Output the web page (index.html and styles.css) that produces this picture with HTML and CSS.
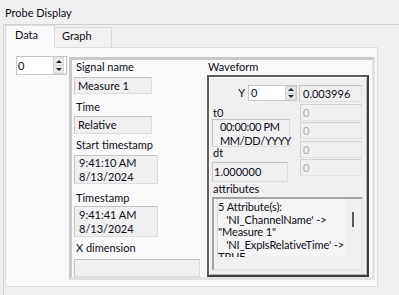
FILE: index.html
```html
<!DOCTYPE html>
<html>
<head>
<meta charset="utf-8">
<link rel="stylesheet" href="styles.css">
</head>
<body>
<div class="title">Probe Display</div>
<div class="frame">
  <div class="tabs">
    <div class="tab active">Data</div>
    <div class="tab graph">Graph</div>
  </div>
  <div class="page">
    <div class="spin idx">
      <span class="val">0</span>
      <span class="btns"><span class="b"><i class="up"></i></span><span class="b"><i class="dn"></i></span></span>
    </div>
    <div class="cluster">
      <div class="col-left">
        <div class="lbl">Signal name</div>
        <div class="fld f-name">Measure 1</div>
        <div class="lbl l-time">Time</div>
        <div class="fld f-time">Relative</div>
        <div class="lbl l-start">Start timestamp</div>
        <div class="fld ts f-start">9:41:10 AM<br>8/13/2024</div>
        <div class="lbl l-ts">Timestamp</div>
        <div class="fld ts f-ts">9:41:41 AM<br>8/13/2024</div>
        <div class="lbl l-x">X dimension</div>
        <div class="fld f-x"></div>
      </div>
      <div class="col-right">
        <div class="lbl l-wf">Waveform</div>
        <div class="wf">
          <div class="wf-top">
            <div class="wf-left">
              <div class="yrow">
                <span class="ylbl">Y</span>
                <div class="spin yspin">
                  <span class="val">0</span>
                  <span class="btns"><span class="b"><i class="up"></i></span><span class="b"><i class="dn"></i></span></span>
                </div>
              </div>
              <div class="slbl l-t0">t0</div>
              <div class="fld t0">00:00:00 PM<br>MM/DD/YYYY</div>
              <div class="slbl l-dt">dt</div>
              <div class="fld dt">1.000000</div>
            </div>
            <div class="wf-right">
              <div class="fld yval">0.003996</div>
              <div class="fld zero z1">0</div>
              <div class="fld zero z2">0</div>
              <div class="fld zero z3">0</div>
              <div class="fld zero z4">0</div>
            </div>
          </div>
          <div class="slbl l-attr">attributes</div>
          <div class="attr">
            <div class="attr-text"><div>5 Attribute(s):</div><div>   'NI_ChannelName' -&gt;</div><div>"Measure 1"</div><div>   'NI_ExpIsRelativeTime' -&gt;</div><div class="cut">TRUE</div></div>
            <div class="attr-sb"><span class="thumb"></span></div>
          </div>
        </div>
      </div>
    </div>
  </div>
</div>
</body>
</html>
```

FILE: styles.css
```css
* { box-sizing: border-box; }
html, body { margin: 0; padding: 0; }
body {
  width: 399px;
  height: 295px;
  overflow: hidden;
  background: #f0f0f0;
  font-family: Lato, "Noto Sans", sans-serif;
  font-size: 11px;
  line-height: 16px;
  color: #0c0c16;
}
.title { height: 24px; padding: 5px 0 0 5px; }
.frame {
  margin-left: 3px;
  border-left: 1px solid #d2d2d2;
  border-top: 1px solid #d2d2d2;
  padding-left: 1px;
  height: 271px;
}
.tabs { display: flex; align-items: flex-end; height: 22px; }
.tab { border: 1px solid #dadada; border-bottom: none; }
.tab.active {
  width: 50px; height: 23px; margin-bottom: -1px;
  padding: 1px 0 0 9px;
  background: #f9f9f9;
  position: relative; z-index: 1;
}
.tab.graph {
  width: 57px; height: 20px;
  padding: 0 0 0 7px;
  background: #f2f2f2;
  border-left: none;
}
.page {
  width: 373px; height: 240px;
  background: #f9f9f9;
  border: 1px solid #dedede;
  display: flex; align-items: flex-start; gap: 2px;
  padding: 8px 0 0 10px;
}
/* spinner */
.spin { display: flex; background: #fff; border: 1px solid #c6c6c6; }
.spin .val { flex: 1; }
.btns { display: flex; flex-direction: column; border: 1px solid #d6d6d6; background: #e9e9e9; }
.btns .b { flex: 1; display: flex; align-items: center; justify-content: center; }
.btns .b + .b { border-top: 1px solid #cfcfcf; }
.up { width: 0; height: 0; border-left: 3px solid transparent; border-right: 3px solid transparent; border-bottom: 3px solid #222; }
.dn { width: 0; height: 0; border-left: 3px solid transparent; border-right: 3px solid transparent; border-top: 3px solid #222; }
.idx { width: 51px; height: 19px; line-height: 17px; }
.idx .val { padding-left: 1px; }
.idx .btns { width: 11px; margin: 0 2px 0 0; }

/* cluster */
.cluster {
  width: 306px; height: 223px; margin-top: 1px;
  border: 3px solid;
  border-color: #c9c9c9 #e2e2e2 #e2e2e2 #c9c9c9;
  display: flex;
  padding: 0 3px 0 2px;
}
.col-left { width: 133px; display: flex; flex-direction: column; align-items: flex-start; }
.col-right { width: 162px; }
.lbl { line-height: 14px; padding-left: 2px; }
.fld {
  background: #f0f0f0;
  border: 1px solid;
  border-color: #c3c3c3 #dcdcdc #dcdcdc #c3c3c3;
  line-height: 15px;
  white-space: nowrap;
}
.f-name { width: 78px; height: 17px; margin-top: 3px; padding-left: 3px; }
.l-time { margin-top: 6px; }
.f-time { width: 78px; height: 18px; margin-top: 2px; padding-left: 3px; }
.l-start { margin-top: 4px; }
.ts { width: 84px; height: 29px; line-height: 14px; padding-left: 4px; }
.f-start { margin-top: 3px; }
.l-ts { margin-top: 7px; }
.f-ts { margin-top: 1px; height: 31px; padding-top: 1px; }
.l-x { margin-top: 4px; }
.f-x { width: 126px; height: 18px; margin-top: 4px; }

/* waveform */
.l-wf { padding-left: 1px; }
.wf {
  margin-top: 1px;
  width: 162px; height: 202px;
  border: 2px solid;
  border-color: #5e5e5e #3c3c3c #3c3c3c #5e5e5e;
  box-shadow: inset 1px 1px 0 #fdfdfd, inset -1px -1px 0 #b4b4b4;
  background: #f0f0f0;
  padding: 8px 4px 0 3px;
}
.wf-top { display: flex; }
.wf-left { width: 87px; display: flex; flex-direction: column; align-items: flex-start; }
.wf-right { width: 63px; display: flex; flex-direction: column; }
.yrow { align-self: stretch; display: flex; justify-content: flex-end; height: 16px; padding-right: 2px; }
.ylbl { margin-right: 3px; }
.yspin { width: 49px; height: 16px; line-height: 14px; }
.yspin .val { padding-left: 2px; }
.yspin .btns { width: 11px; margin: 0 0 0 0; }
.slbl { line-height: 13px; padding-left: 1px; }
.l-t0 { margin-top: 5px; }
.t0 { width: 78px; height: 28px; line-height: 14px; padding-left: 7px; letter-spacing: -0.35px; }
.l-dt { margin-top: -1px; }
.dt { width: 76px; height: 20px; margin-top: 3px; line-height: 18px; padding-left: 1px; }
.yval { height: 17px; padding-left: 3px; line-height: 15px; }
.zero { margin-left: 1px; height: 17px; line-height: 15px; padding-left: 2px; color: #a8a8a8; border-color: #d2d2d2 #e2e2e2 #e2e2e2 #d2d2d2; }
.z1 { margin-top: 2px; }
.z2 { margin-top: 1px; }
.z3 { margin-top: 2px; }
.z4 { margin-top: 1px; }
.l-attr { margin-top: 0; }
.attr {
  margin-top: 2px;
  width: 151px; height: 74px;
  border: 2px solid;
  border-color: #a3a3a3 #e4e4e4 #e4e4e4 #a3a3a3;
  display: flex; align-items: flex-start;
  padding: 0 1px 0 3px;
}
.attr-text {
  flex: 1; height: 58px; overflow: hidden;
  white-space: pre; line-height: 12.6px;
  background: #f4f4f4;
  border-left: 1px solid #dcdcdc;
  padding-top: 2px;
  letter-spacing: -0.1px;
}
.attr-sb { width: 14px; height: 58px; position: relative; }
.thumb { position: absolute; left: 6px; top: 13px; width: 2px; height: 15px; background: #5a5a5a; }
```
